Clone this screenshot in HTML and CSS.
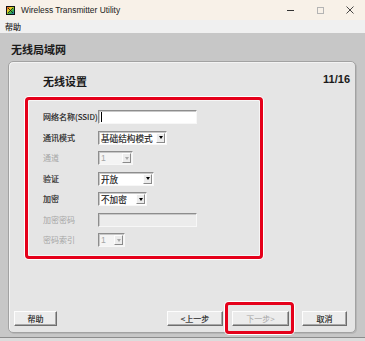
FILE: index.html
```html
<!DOCTYPE html>
<html lang="zh-CN">
<head>
  <meta charset="UTF-8">
  <meta name="viewport" content="width=device-width, initial-scale=1.0">
  <title>Wireless Transmitter Utility</title>
  <link rel="stylesheet" href="styles.css">
</head>
<body>
  <div class="window">
    <div class="titlebar">
      <svg class="app-icon" width="9" height="9" viewBox="0 0 9 9">
        <defs>
          <linearGradient id="rainbow" x1="0" y1="0" x2="1" y2="1">
            <stop offset="0" stop-color="#e3262f"/>
            <stop offset="0.35" stop-color="#f6d11c"/>
            <stop offset="0.65" stop-color="#2fae4a"/>
            <stop offset="1" stop-color="#2c5fd8"/>
          </linearGradient>
        </defs>
        <rect x="0.5" y="0.5" width="8" height="8" fill="url(#rainbow)" stroke="#111"/>
        <path d="M2 2 L7 7 M7 2 L2 7" stroke="#111" stroke-width="0.8"/>
      </svg>
      <span class="title">Wireless Transmitter Utility</span>
      <div class="controls">
        <span class="ctl"><span class="ctl-min"></span></span>
        <span class="ctl"><span class="ctl-max"></span></span>
        <span class="ctl">
          <svg width="8" height="8" viewBox="0 0 8 8"><path d="M0.5 0.5 L7.5 7.5 M7.5 0.5 L0.5 7.5" stroke="#333" stroke-width="0.9"/></svg>
        </span>
      </div>
    </div>
    <div class="menubar"><span>帮助</span></div>

    <div class="client">
      <div class="page-title">无线局域网</div>
      <div class="panel">
        <div class="panel-head">
          <span class="step-title">无线设置</span>
          <span class="step-count">11/16</span>
        </div>

        <div class="highlight-box">
          <div class="form">
            <label>网络名称(SSID)</label>
            <div class="textbox w-wide"><span class="caret"></span></div>

            <label>通讯模式</label>
            <div class="select w-mode"><span class="select-text">基础结构模式</span><span class="arrow"><i></i></span></div>

            <label class="disabled">通道</label>
            <div class="select disabled w-channel"><span class="select-text">1</span><span class="arrow"><i></i></span></div>

            <label>验证</label>
            <div class="select w-auth"><span class="select-text">开放</span><span class="arrow"><i></i></span></div>

            <label>加密</label>
            <div class="select w-enc"><span class="select-text">不加密</span><span class="arrow"><i></i></span></div>

            <label class="disabled">加密密码</label>
            <div class="textbox disabled w-wide"></div>

            <label class="disabled">密码索引</label>
            <div class="select disabled w-index"><span class="select-text">1</span><span class="arrow"><i></i></span></div>
          </div>
        </div>

        <div class="buttons">
          <button class="btn btn-help">帮助</button>
          <button class="btn btn-back">&lt;上一步</button>
          <span class="focus-ring"><button class="btn btn-next" disabled>下一步&gt;</button></span>
          <button class="btn btn-cancel">取消</button>
        </div>
      </div>
    </div>
  </div>
</body>
</html>
```

FILE: styles.css
```css
:root {
  --cjk: "Noto Sans CJK SC", "Liberation Sans", sans-serif;
  --red: #e5001a;
  --panel: #e5e5e5;
  --client: #c7c7c7;
  --text: #1a1a1a;
  --muted: #a6a6a6;
}

html, body {
  margin: 0;
  padding: 0;
}

body {
  width: 365px;
  height: 341px;
  overflow: hidden;
  background-color: #dcdcdc;
  font-family: var(--cjk);
  color: var(--text);
}

.window {
  display: flex;
  flex-direction: column;
  height: 341px;
}

/* title bar */
.titlebar {
  display: flex;
  align-items: center;
  height: 20px;
  background-color: #f8f1e8;
  padding-left: 6px;
}

.app-icon {
  display: block;
  margin-top: 1px;
}

.title {
  margin-left: 6px;
  font-family: "Liberation Sans", sans-serif;
  font-size: 8.4px;
  color: #222;
}

.controls {
  display: flex;
  margin-left: auto;
  height: 20px;
}

.ctl {
  display: flex;
  align-items: center;
  justify-content: center;
  width: 30px;
}

.ctl-min {
  width: 7px;
  height: 1px;
  background-color: #333;
}

.ctl-max {
  width: 5px;
  height: 5px;
  border: 1px solid #b4b4b4;
}

/* menu */
.menubar {
  height: 13px;
  line-height: 13px;
  background-color: #f0f0f0;
  padding-left: 5px;
  font-size: 8px;
  -webkit-text-stroke: 0.15px #1a1a1a;
}

/* client area */
.client {
  display: flex;
  flex-direction: column;
  height: 305px;
  box-sizing: border-box;
  background-color: var(--client);
  padding: 0 9px 4px 8px;
  border-bottom: 1px solid #8c8c8c;
}

.page-title {
  height: 28px;
  box-sizing: border-box;
  padding: 4px 0 0 3px;
  line-height: 24px;
  font-size: 11px;
  font-weight: bold;
}

.panel {
  display: flex;
  flex-direction: column;
  height: 273px;
  box-sizing: border-box;
  background-color: var(--panel);
  border: 1px solid #a2a2a2;
  border-radius: 5px;
  box-shadow: inset 1px 1px 0 #f3f3f3, 1px 1px 0 #b6b6b6;
}

.panel-head {
  display: flex;
  align-items: flex-start;
  height: 35px;
  padding: 0 5px 0 34px;
}

.step-title {
  margin-top: 11px;
  line-height: 16px;
  font-size: 11px;
  font-weight: bold;
}

.step-count {
  margin-left: auto;
  margin-top: 10px;
  line-height: 14px;
  font-family: "Liberation Sans", sans-serif;
  font-size: 11px;
  font-weight: bold;
}

/* red highlight */
.highlight-box {
  width: 238px;
  height: 162px;
  box-sizing: border-box;
  margin-left: 16px;
  border: 3px solid var(--red);
  border-radius: 4px;
  box-shadow: 0 0 0 1px #fff, inset 0 0 0 1px #f6f6f6;
}

.form {
  display: grid;
  grid-template-columns: 55px auto;
  grid-auto-rows: 20.5px;
  align-items: center;
  justify-items: start;
  padding: 6.75px 0 0 15px;
}

.form label {
  font-size: 8px;
  line-height: 12px;
  -webkit-text-stroke: 0.15px #1a1a1a;
}

.form label.disabled {
  color: var(--muted);
  -webkit-text-stroke: 0;
}

/* inputs */
.textbox,
.select {
  display: flex;
  align-items: center;
  height: 14px;
  box-sizing: border-box;
  background-color: #fff;
  border: 1px solid;
  border-color: #8d8d8d #f7f7f7 #f7f7f7 #8d8d8d;
  box-shadow: inset 1px 1px 0 #c8c8c8;
}

.textbox.disabled {
  background-color: #ececec;
}

.select.disabled {
  background-color: #f4f4f4;
}

.caret {
  width: 1px;
  height: 10px;
  margin-left: 2px;
  background-color: #000;
}

.w-wide { width: 99px; }
.w-mode { width: 69px; }
.w-channel { width: 35px; }
.w-auth { width: 56px; }
.w-enc { width: 49px; }
.w-index { width: 27px; }

.select-text {
  flex: 1;
  padding-left: 2px;
  font-size: 8.6px;
  line-height: 12px;
  white-space: nowrap;
  overflow: hidden;
  -webkit-text-stroke: 0.15px #1a1a1a;
}

.select.disabled .select-text {
  color: var(--muted);
  font-family: "Liberation Sans", sans-serif;
  -webkit-text-stroke: 0;
}

.arrow {
  display: flex;
  align-items: center;
  justify-content: center;
  width: 9px;
  height: 10px;
  box-sizing: border-box;
  margin-right: 1px;
  background-color: #ececec;
  border: 1px solid;
  border-color: #fdfdfd #8a8a8a #8a8a8a #fdfdfd;
}

.arrow i {
  display: block;
  width: 0;
  height: 0;
  border-left: 2.5px solid transparent;
  border-right: 2.5px solid transparent;
  border-top: 3px solid #000;
}

.select.disabled .arrow i {
  border-top-color: #a8a8a8;
}

/* buttons */
.buttons {
  display: flex;
  align-items: flex-end;
  margin-top: auto;
  padding: 0 8px 6px 5px;
}

.btn {
  height: 15px;
  box-sizing: border-box;
  padding: 0;
  font-family: var(--cjk);
  font-size: 8px;
  line-height: 12px;
  color: var(--text);
  -webkit-text-stroke: 0.15px #1a1a1a;
  background-color: #ececec;
  border: 1px solid;
  border-color: #fdfdfd #6e6e6e #6e6e6e #fdfdfd;
  box-shadow: inset -1px -1px 0 #a8a8a8;
}

.btn:disabled {
  color: var(--muted);
  -webkit-text-stroke: 0;
}

.btn-help { width: 43px; }
.btn-back { width: 56px; margin-left: auto; }
.btn-next { width: 57px; display: block; }
.btn-cancel { width: 45px; margin-left: 13px; }

.focus-ring {
  position: relative;
  margin-left: 9px;
}

.focus-ring::after {
  content: "";
  position: absolute;
  top: -9px;
  left: -7.5px;
  right: -4.5px;
  bottom: -8px;
  border: 3px solid var(--red);
  border-radius: 4px;
  box-shadow: 0 0 0 1px #fff;
}
```
